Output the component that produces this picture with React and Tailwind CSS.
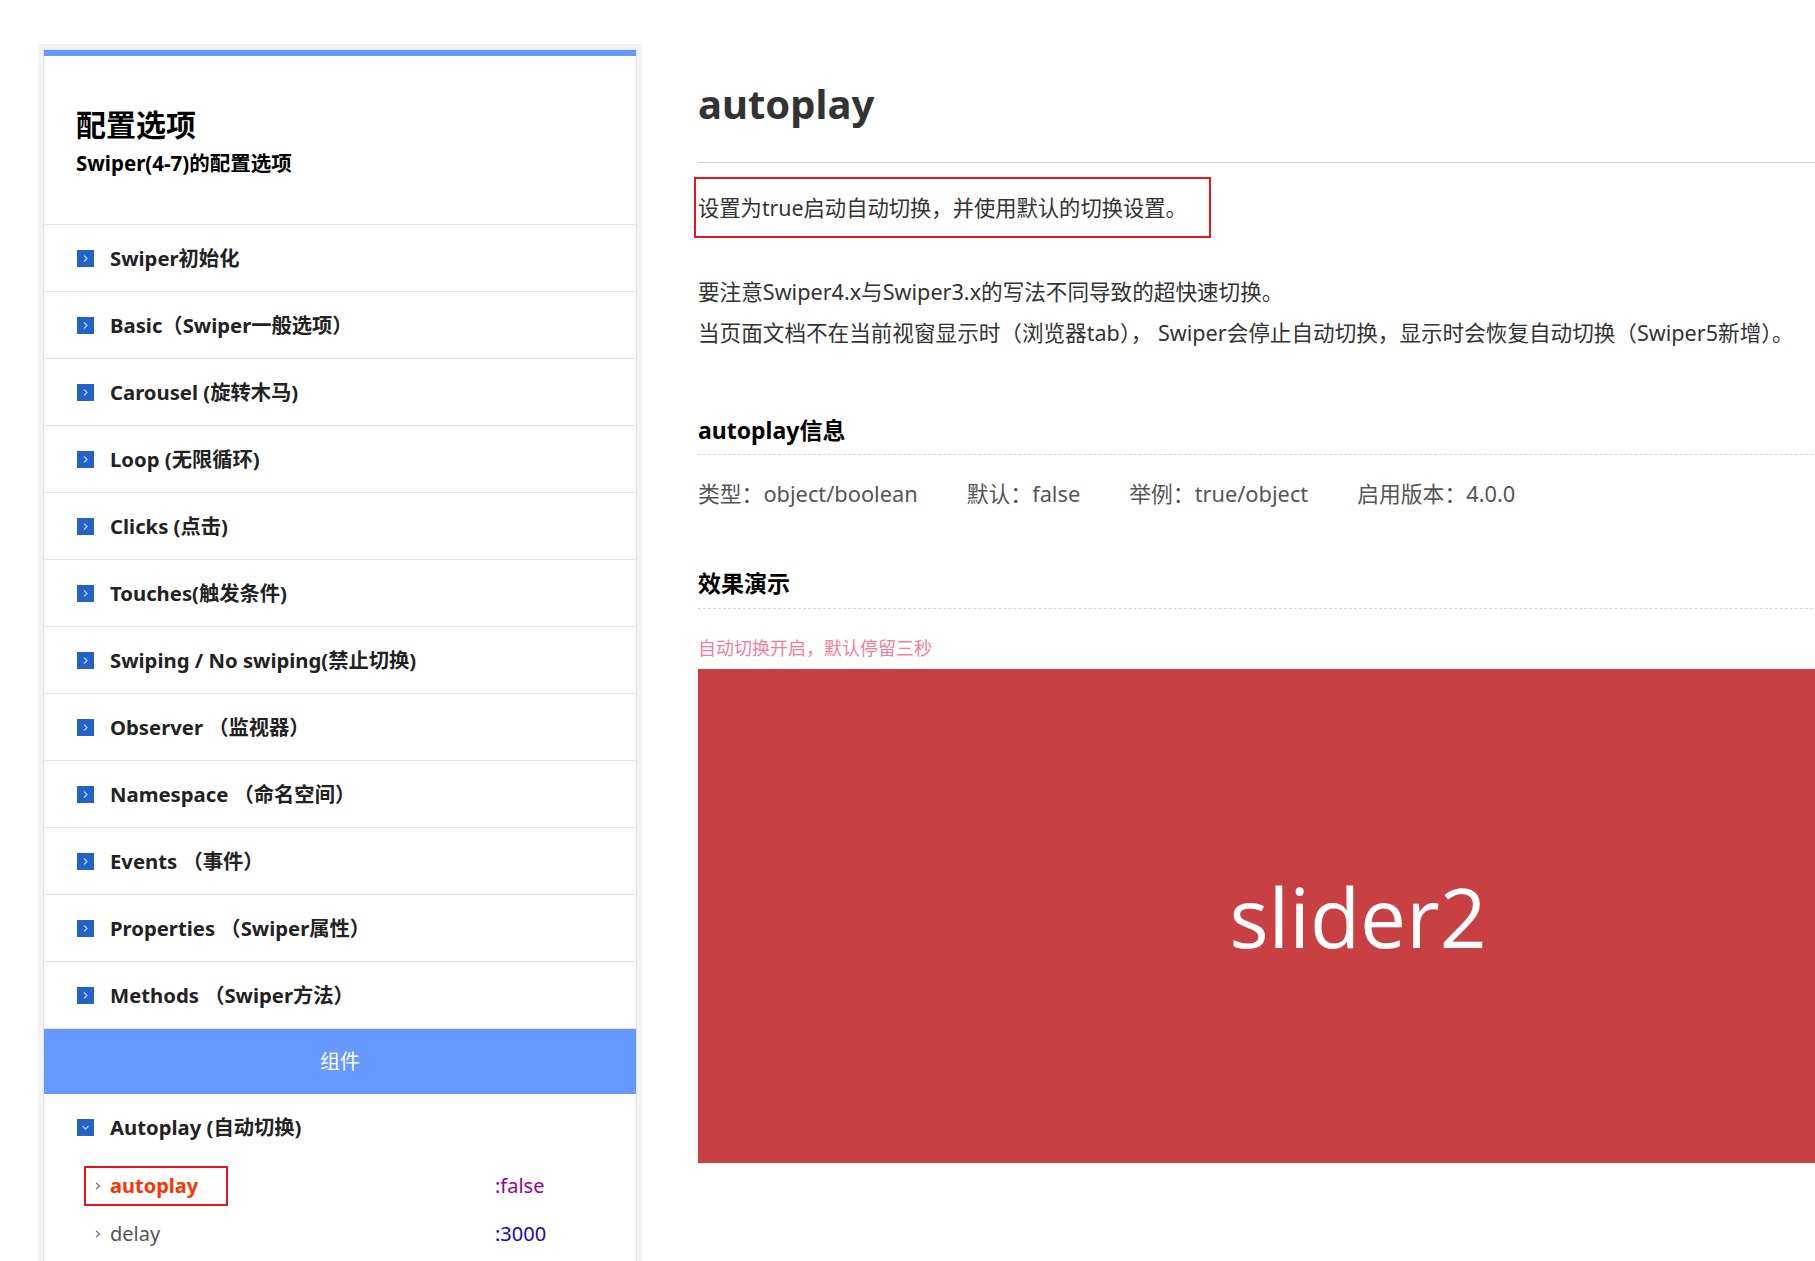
import React from "react";

const FONT = { fontFamily: '"Noto Sans","Noto Sans CJK SC",sans-serif' };

const items = [
  "Swiper初始化",
  "Basic（Swiper一般选项）",
  "Carousel (旋转木马)",
  "Loop (无限循环)",
  "Clicks (点击)",
  "Touches(触发条件)",
  "Swiping / No swiping(禁止切换)",
  "Observer （监视器）",
  "Namespace （命名空间）",
  "Events （事件）",
  "Properties （Swiper属性）",
  "Methods （Swiper方法）",
];

function BoxIcon({ down }) {
  return (
    <svg width="17" height="17" viewBox="0 0 17 17" className="shrink-0">
      <rect width="17" height="17" fill="#2362c6" />
      {down ? (
        <path d="M5.5 7 L8.5 10 L11.5 7" fill="none" stroke="#b4ccf2" strokeWidth="1.3" />
      ) : (
        <path d="M7 5.5 L10 8.5 L7 11.5" fill="none" stroke="#b4ccf2" strokeWidth="1.3" />
      )}
    </svg>
  );
}

function SmallChevron() {
  return (
    <svg width="6" height="10" viewBox="0 0 6 10" className="shrink-0">
      <path d="M1 2 L4.5 5 L1 8" fill="none" stroke="#777" strokeWidth="1.2" />
    </svg>
  );
}

export default function App() {
  return (
    <div className="w-[1815px] h-[1261px] overflow-hidden bg-white flex items-start pt-[44px] pl-[38px]" style={FONT}>
      {/* Left panel */}
      <div className="w-[604px] shrink-0 bg-[#f2f3f5] px-[5px] pt-[5px] min-h-[1300px]">
        <div className="bg-white border border-[#e3e3e3] min-h-[1300px]">
          <div className="h-[6px] bg-[#6699ff]" />
          <div className="h-[169px] border-b border-[#e6e6e6] px-[32px] pt-[51px]">
            <div className="text-[30px] leading-[36px] font-bold text-black">配置选项</div>
            <div className="mt-[6px] text-[20.5px] leading-[28px] font-bold text-black whitespace-nowrap">Swiper(4-7)的配置选项</div>
          </div>
          {items.map((t) => (
            <div key={t} className="h-[67px] border-b border-[#e6e6e6] flex items-center pl-[33px]">
              <BoxIcon />
              <span className="ml-[16px] text-[20.3px] font-bold text-[#222] whitespace-nowrap">{t}</span>
            </div>
          ))}
          <div className="h-[65px] bg-[#6699ff] flex items-center justify-center text-white text-[20px]">组件</div>
          <div className="h-[67px] flex items-center pl-[33px]">
            <BoxIcon down />
            <span className="ml-[16px] text-[20.3px] font-bold text-[#222] whitespace-nowrap">Autoplay (自动切换)</span>
          </div>
          <div className="pt-[1px]">
            <div className="h-[48px] flex items-center pl-[40px]">
              <div className="w-[411px] shrink-0">
                <div className="w-[144px] h-[40px] border-2 border-[#e8141e] flex items-center pl-[9px]">
                  <SmallChevron />
                  <span className="ml-[9px] text-[20px] font-bold text-[#ff3300]">autoplay</span>
                </div>
              </div>
              <span className="text-[20px] text-[#990099]">:false</span>
            </div>
            <div className="h-[48px] flex items-center pl-[40px]">
              <div className="w-[411px] shrink-0">
                <div className="h-[40px] border-2 border-transparent flex items-center pl-[9px]">
                  <SmallChevron />
                  <span className="ml-[9px] text-[20px] text-[#555]">delay</span>
                </div>
              </div>
              <span className="text-[20px] text-[#2200cc]">:3000</span>
            </div>
          </div>
        </div>
      </div>

      {/* Main */}
      <div className="w-[1320px] shrink-0 ml-[56px] pt-[33px]">
        <h1 className="text-[40px] leading-[54px] font-bold text-[#333]">autoplay</h1>
        <div className="mt-[31px] border-t border-[#d0d0d0]" />
        <div className="mt-[14px] ml-[-4px] w-[517px] h-[61px] border-2 border-[#e8141e] pl-[2px] flex items-center">
          <span className="text-[21.3px] text-[#333] whitespace-nowrap">设置为true启动自动切换，并使用默认的切换设置。</span>
        </div>
        <div className="mt-[33px] text-[21.6px] leading-[41px] text-[#333] whitespace-nowrap">
          <p>要注意Swiper4.x与Swiper3.x的写法不同导致的超快速切换。</p>
          <p>当页面文档不在当前视窗显示时（浏览器tab）， Swiper会停止自动切换，显示时会恢复自动切换（Swiper5新增）。</p>
        </div>
        <h3 className="mt-[59px] text-[23px] leading-[36px] font-bold text-black pb-[6px] border-b border-dashed border-[#d8d8d8]">autoplay信息</h3>
        <div className="mt-[18px] flex gap-[49px] text-[21.8px] leading-[41px] text-[#555] whitespace-nowrap">
          <span>类型：object/boolean</span>
          <span>默认：false</span>
          <span>举例：true/object</span>
          <span>启用版本：4.0.0</span>
        </div>
        <h3 className="mt-[51px] text-[23px] leading-[36px] font-bold text-black pb-[7px] border-b border-dashed border-[#d8d8d8]">效果演示</h3>
        <div className="mt-[24px] text-[18px] leading-[30px] text-[#f27d9c]">自动切换开启，默认停留三秒</div>
        <div className="mt-[6px] h-[494px] bg-[#c94043] flex items-center justify-center">
          <span className="text-white text-[82px] leading-none" style={{ fontFamily: '"Open Sans","Noto Sans",sans-serif' }}>slider2</span>
        </div>
      </div>
    </div>
  );
}
